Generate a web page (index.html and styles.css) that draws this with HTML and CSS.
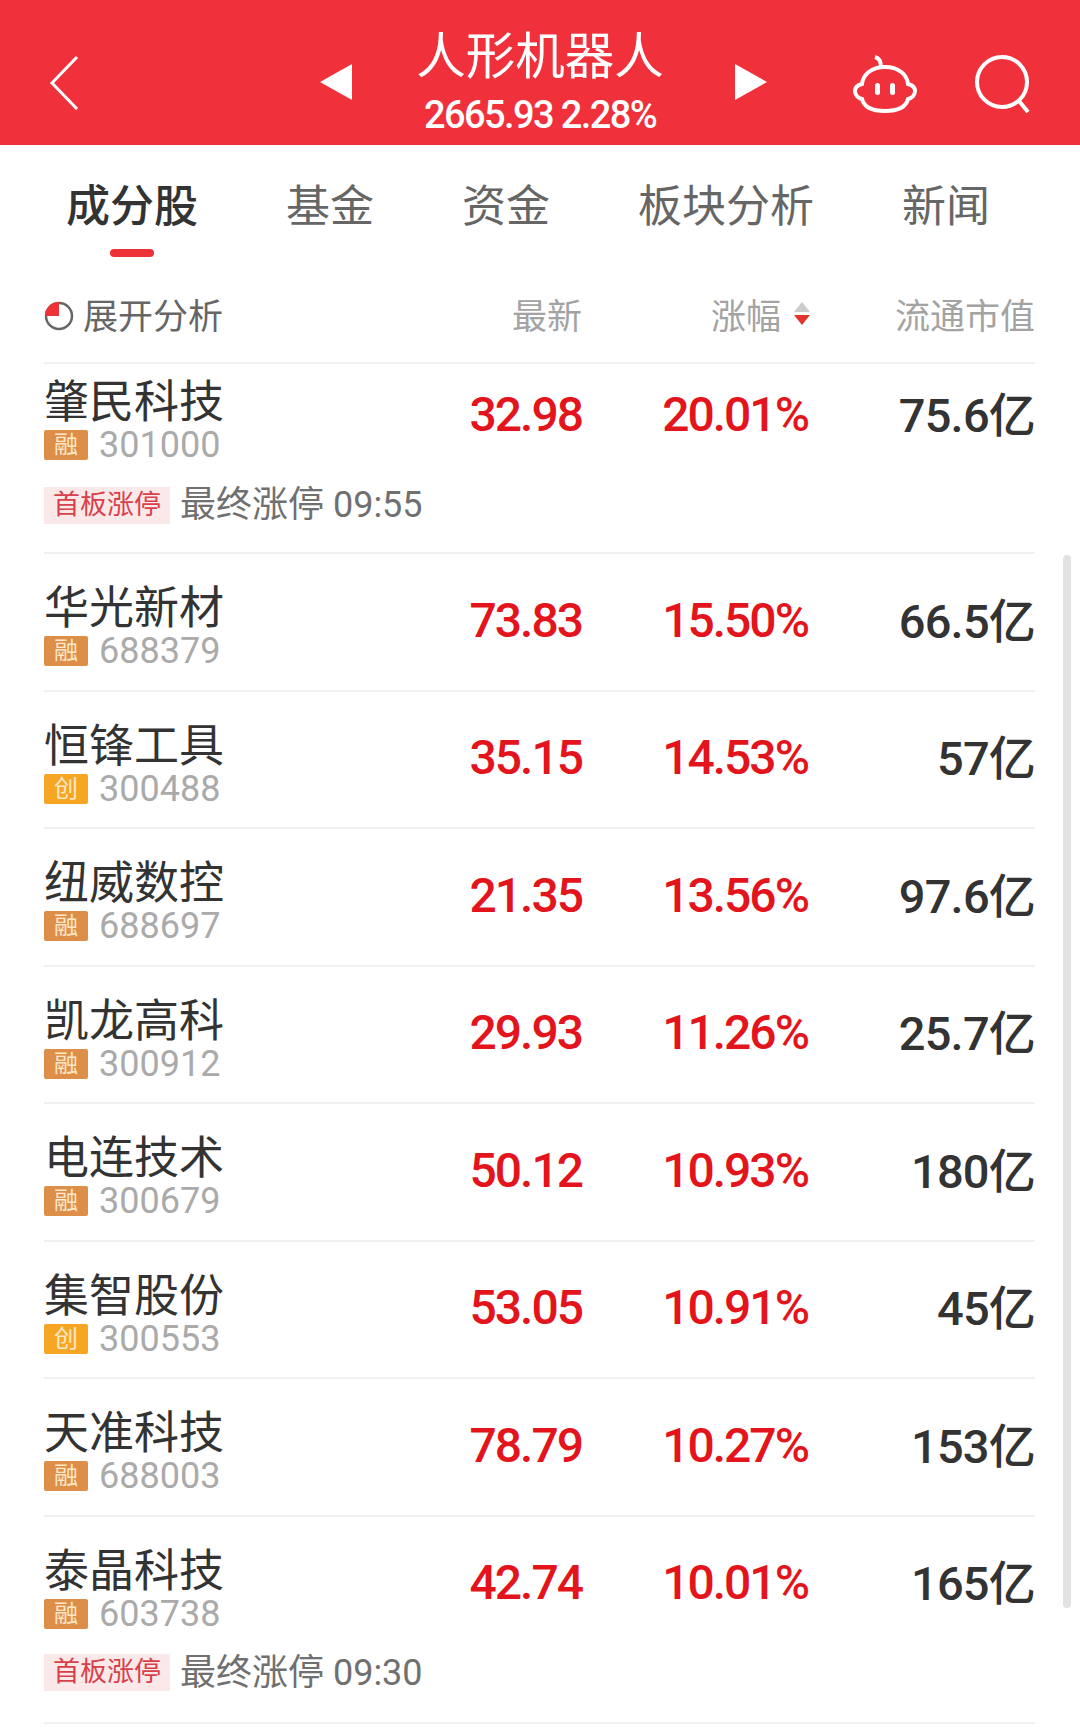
FILE: index.html
```html
<!DOCTYPE html>
<html lang="zh-CN">
<head>
  <meta charset="UTF-8" />
  <meta name="viewport" content="width=device-width, initial-scale=1.0">
  <title>人形机器人</title>
  <link rel="stylesheet" href="styles.css">
</head>
<body>
  <header class="topbar">
    <div class="topbar-left">
      <svg class="icon-back" width="30" height="56" viewBox="0 0 30 56"><path d="M28 2 3 28l25 26" fill="none" stroke="#fff" stroke-width="3"/></svg>
    </div>
    <div class="topbar-center">
      <span class="tri tri-left"></span>
      <div class="topbar-title">
        <div class="title">人形机器人</div>
        <div class="subtitle">2665.93 2.28%</div>
      </div>
      <span class="tri tri-right"></span>
    </div>
    <div class="topbar-right">
      <svg width="66" height="60" viewBox="0 0 66 60"><g fill="none" stroke="#fff" stroke-width="4"><path d="M29 13c0-5-2-9-6-10"/><path d="M33 13c-13 0-22 7-23 17-4 1-7 3-7 7s3 7 7 8c2 8 9 12 23 12s21-4 23-12c4-1 7-4 7-8s-3-6-7-7c-1-10-10-17-23-17z"/></g><rect x="23" y="29" width="5" height="12" rx="2.5" fill="#fff"/><rect x="38" y="29" width="5" height="12" rx="2.5" fill="#fff"/></svg>
      <svg width="60" height="60" viewBox="0 0 60 60"><circle cx="28" cy="28" r="25" fill="none" stroke="#fff" stroke-width="4"/><path d="M45 47l9 11" stroke="#fff" stroke-width="4" fill="none"/></svg>
    </div>
  </header>

  <nav class="tabs">
    <a class="tab tab-active">成分股</a>
    <a class="tab">基金</a>
    <a class="tab">资金</a>
    <a class="tab">板块分析</a>
    <a class="tab">新闻</a>
  </nav>

  <main class="list">
    <div class="row head">
      <div class="head-name">
        <svg class="head-icon" width="30" height="30" viewBox="0 0 30 30"><circle cx="15" cy="15" r="13" fill="none" stroke="#666" stroke-width="2.5"/><path d="M15 1v14H1A14 14 0 0 1 15 1z" fill="#ee3338"/></svg>
        展开分析
      </div>
      <div class="col">最新</div>
      <div class="col col-sort">涨幅<span class="sort"><i class="sort-up"></i><i class="sort-down"></i></span></div>
      <div class="col">流通市值</div>
    </div>

    <div class="item item-tall">
      <div class="row">
        <div><div class="name">肇民科技</div><div class="code"><span class="badge">融</span>301000</div></div>
        <div class="num up">32.98</div><div class="num up">20.01%</div><div class="num cap">75.6亿</div>
      </div>
      <div class="note"><span class="tag">首板涨停</span>最终涨停 09:55</div>
    </div>
    <div class="item">
      <div class="row">
        <div><div class="name">华光新材</div><div class="code"><span class="badge">融</span>688379</div></div>
        <div class="num up">73.83</div><div class="num up">15.50%</div><div class="num cap">66.5亿</div>
      </div>
    </div>
    <div class="item">
      <div class="row">
        <div><div class="name">恒锋工具</div><div class="code"><span class="badge badge-chuang">创</span>300488</div></div>
        <div class="num up">35.15</div><div class="num up">14.53%</div><div class="num cap">57亿</div>
      </div>
    </div>
    <div class="item">
      <div class="row">
        <div><div class="name">纽威数控</div><div class="code"><span class="badge">融</span>688697</div></div>
        <div class="num up">21.35</div><div class="num up">13.56%</div><div class="num cap">97.6亿</div>
      </div>
    </div>
    <div class="item">
      <div class="row">
        <div><div class="name">凯龙高科</div><div class="code"><span class="badge">融</span>300912</div></div>
        <div class="num up">29.93</div><div class="num up">11.26%</div><div class="num cap">25.7亿</div>
      </div>
    </div>
    <div class="item">
      <div class="row">
        <div><div class="name">电连技术</div><div class="code"><span class="badge">融</span>300679</div></div>
        <div class="num up">50.12</div><div class="num up">10.93%</div><div class="num cap">180亿</div>
      </div>
    </div>
    <div class="item">
      <div class="row">
        <div><div class="name">集智股份</div><div class="code"><span class="badge badge-chuang">创</span>300553</div></div>
        <div class="num up">53.05</div><div class="num up">10.91%</div><div class="num cap">45亿</div>
      </div>
    </div>
    <div class="item">
      <div class="row">
        <div><div class="name">天准科技</div><div class="code"><span class="badge">融</span>688003</div></div>
        <div class="num up">78.79</div><div class="num up">10.27%</div><div class="num cap">153亿</div>
      </div>
    </div>
    <div class="item item-last">
      <div class="row">
        <div><div class="name">泰晶科技</div><div class="code"><span class="badge">融</span>603738</div></div>
        <div class="num up">42.74</div><div class="num up">10.01%</div><div class="num cap">165亿</div>
      </div>
      <div class="note"><span class="tag">首板涨停</span>最终涨停 09:30</div>
    </div>
  </main>

  <div class="scrollbar"></div>
</body>
</html>
```

FILE: styles.css
```css
html, body {
  margin: 0;
  height: 1728px;
  overflow: hidden;
}
body {
  position: relative;
  background-color: #fff;
  font-family: Roboto, "Noto Sans CJK SC", sans-serif;
  color: #333;
}

.topbar {
  display: grid;
  grid-template-columns: 1fr auto 1fr;
  height: 145px;
  background-color: #f0303b;
  color: #fff;
}
.topbar-left {
  display: flex;
  align-items: center;
  padding: 21px 0 0 49px;
}
.topbar-center {
  display: flex;
  align-items: center;
  gap: 64px;
}
.topbar-title {
  text-align: center;
}
.title {
  font-size: 49.5px;
  line-height: 62px;
  margin-top: 15px;
}
.subtitle {
  font-size: 38px;
  line-height: 40px;
  font-weight: 500;
  letter-spacing: -1.6px;
  margin-top: 7px;
}
.tri {
  width: 0;
  height: 0;
  margin-top: 18px;
  border-top: 18px solid transparent;
  border-bottom: 18px solid transparent;
}
.tri-left {
  border-right: 32px solid #fff;
}
.tri-right {
  border-left: 32px solid #fff;
  transform: translateX(7px);
}
.topbar-right {
  display: flex;
  align-items: center;
  justify-content: flex-end;
  gap: 56px;
  padding: 22px 46px 0 0;
}

.tabs {
  display: flex;
  height: 110px;
  padding-left: 66px;
  gap: 88px;
  font-size: 44px;
  color: #666;
}
.tab {
  position: relative;
  line-height: 124px;
}
.tab-active {
  font-weight: 500;
  color: #333;
}
.tab-active::after {
  content: "";
  position: absolute;
  left: 44px;
  bottom: -2px;
  width: 44px;
  height: 8px;
  border-radius: 4px;
  background-color: #ee3338;
}

.list {
  margin: 0 45px 0 44px;
}
.row {
  display: grid;
  grid-template-columns: 1fr 170px 226px 227px;
  align-items: center;
}
.head {
  height: 97px;
  padding-top: 10px;
  border-bottom: 2px solid #f0f0f0;
  font-size: 35px;
  color: #a3a3a3;
}
.head-name {
  display: flex;
  align-items: center;
  gap: 9px;
  color: #666;
}
.head-icon {
  margin-top: 4px;
}
.col {
  text-align: right;
}
.col-sort {
  display: flex;
  justify-content: flex-end;
  align-items: center;
  gap: 13px;
  margin-right: -2px;
}
.sort {
  display: flex;
  flex-direction: column;
  gap: 3px;
}
.sort i {
  width: 0;
  height: 0;
  border-left: 8px solid transparent;
  border-right: 8px solid transparent;
}
.sort-up {
  border-bottom: 10px solid #ccc;
}
.sort-down {
  border-top: 10px solid #e0342c;
}

.item {
  height: 135.5px;
  border-bottom: 2px solid #f0f0f0;
}
.item-tall {
  height: 188px;
}
.item-last {
  height: 205px;
}
.item .row {
  padding-top: 18px;
}
.item-tall .row {
  padding-top: 2px;
}
.name {
  padding-top: 12px;
  font-size: 45px;
  line-height: 50px;
  white-space: nowrap;
}
.code {
  display: flex;
  align-items: center;
  gap: 11px;
  font-size: 36px;
  line-height: 34px;
  color: #aaa;
}
.badge {
  width: 44px;
  height: 30px;
  border-radius: 2px;
  background-color: #dd8e48;
  color: #fde9c8;
  font-size: 24px;
  line-height: 30px;
  text-align: center;
}
.badge-chuang {
  background-color: #f6a623;
}
.num {
  font-size: 48px;
  font-weight: 500;
  letter-spacing: -2px;
  text-align: right;
  color: #333;
}
.cap {
  padding-bottom: 6px;
  font-size: 47px;
  letter-spacing: -0.8px;
}
.up {
  color: #e3141b;
}
.note {
  display: flex;
  align-items: center;
  gap: 10px;
  margin-top: 23px;
  font-size: 36px;
  line-height: 40px;
  color: #707070;
  white-space: nowrap;
}
.item-last .note {
  margin-top: 22px;
}
.tag {
  padding: 0 9px;
  background-color: #fbe9ea;
  color: #d8404a;
  font-size: 27px;
  line-height: 37px;
}

.scrollbar {
  position: absolute;
  left: 1063px;
  top: 555px;
  width: 8px;
  height: 1053px;
  border-radius: 4px;
  background-color: #e2e2e2;
}
```
